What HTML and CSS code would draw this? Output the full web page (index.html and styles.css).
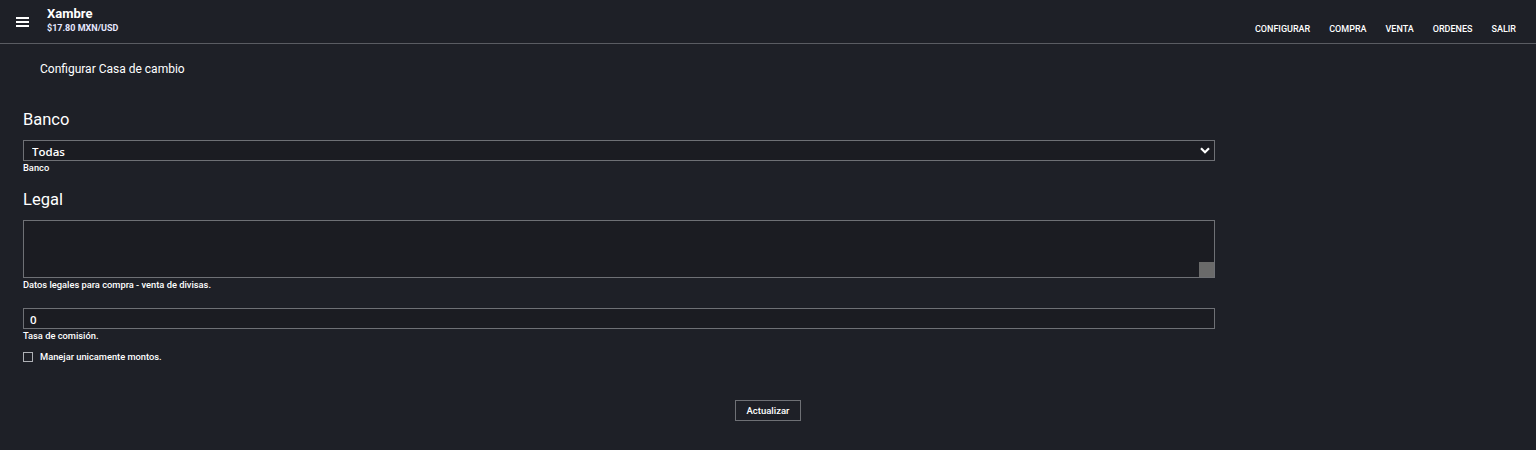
FILE: index.html
```html
<!DOCTYPE html>
<html lang="es">
<head>
    <meta charset="UTF-8">
    <title>Xambre - Configurar</title>
    <link rel="stylesheet" href="styles.css">
</head>
<body>

    <!-- Barra superior -->
    <header class="topbar">
        <div class="brand">
            <button class="menu-btn" aria-label="Menu">
                <svg width="13" height="10" viewBox="0 0 13 10">
                    <rect x="0" y="0" width="13" height="2" fill="#fff"/>
                    <rect x="0" y="4" width="13" height="2" fill="#fff"/>
                    <rect x="0" y="8" width="13" height="2" fill="#fff"/>
                </svg>
            </button>
            <div class="brand-text">
                <span class="brand-name">Xambre</span>
                <span class="brand-rate">$17.80 MXN/USD</span>
            </div>
        </div>
        <nav class="nav">
            <a href="#">CONFIGURAR</a>
            <a href="#">COMPRA</a>
            <a href="#">VENTA</a>
            <a href="#">ORDENES</a>
            <a href="#">SALIR</a>
        </nav>
    </header>

    <main class="page">
        <p class="page-title">Configurar Casa de cambio</p>

        <form class="config-form">
            <h2>Banco</h2>
            <div class="select-wrap">
                <select class="field">
                    <option>Todas</option>
                </select>
                <svg class="chevron" width="10" height="7" viewBox="0 0 10 7">
                    <path d="M1 1.2 L5 5.2 L9 1.2" stroke="#fff" stroke-width="2.2" fill="none"/>
                </svg>
            </div>
            <small class="hint">Banco</small>

            <h2 class="legal">Legal</h2>
            <div class="textarea-wrap">
                <textarea class="field area"></textarea>
                <span class="grip"></span>
            </div>
            <small class="hint">Datos legales para compra - venta de divisas.</small>

            <input class="field number" type="text" value="0">
            <small class="hint">Tasa de comisión.</small>

            <label class="check">
                <span class="box"></span>
                Manejar unicamente montos.
            </label>

            <div class="actions">
                <button type="button" class="btn">Actualizar</button>
            </div>
        </form>
    </main>

</body>
</html>
```

FILE: styles.css
```css
body {
    font-family: Roboto, "Liberation Sans", sans-serif;
    margin: 0;
    background: #1e2027;
    color: #fff;
}

.topbar {
    height: 43px;
    border-bottom: 1px solid #5a5c62;
    display: flex;
    justify-content: space-between;
    align-items: center;
    padding: 0 20px 0 16px;
}

.brand {
    display: flex;
    align-items: center;
}

.menu-btn {
    background: none;
    border: none;
    padding: 0;
    width: 13px;
    height: 10px;
    display: flex;
    margin-top: 1px;
    margin-right: 18px;
}

.brand-text {
    display: flex;
    flex-direction: column;
    margin-top: -3px;
}

.brand-name {
    font-size: 13px;
    font-weight: 700;
    line-height: 16px;
}

.brand-rate {
    font-size: 9px;
    font-weight: 700;
    line-height: 12px;
    color: #e6e8ff;
}

.nav {
    display: flex;
    gap: 19px;
    margin-top: 14px;
}

.nav a {
    color: #fff;
    text-decoration: none;
    font-size: 9px;
    font-weight: 500;
}

.page {
    padding: 0 23px;
}

.page-title {
    font-size: 12px;
    margin: 18px 0 0 17px;
    line-height: 14px;
}

.config-form {
    width: 1192px;
    display: flex;
    flex-direction: column;
}

.config-form h2 {
    font-size: 16.5px;
    font-weight: 400;
    margin: 34px 0 10px;
    line-height: 20px;
}

.config-form h2.legal {
    margin-top: 16px;
    margin-bottom: 10px;
}

.field {
    box-sizing: border-box;
    width: 100%;
    background: #1b1c22;
    border: 1px solid #6e7075;
    color: #fff;
    font-family: "Open Sans", Roboto, sans-serif;
    font-size: 11.5px;
    font-weight: 600;
    margin: 0;
    outline: none;
}

.select-wrap {
    position: relative;
}

select.field {
    height: 21px;
    padding: 1px 0 0 8px;
    appearance: none;
    -webkit-appearance: none;
}

.chevron {
    position: absolute;
    right: 5px;
    top: 7px;
}

.hint {
    font-size: 9.3px;
    font-weight: 500;
    line-height: 12px;
    margin-top: 1px;
}

.textarea-wrap {
    position: relative;
    height: 58px;
}

.area {
    height: 58px;
    resize: none;
    display: block;
}

.grip {
    position: absolute;
    right: 1px;
    bottom: 1px;
    width: 15px;
    height: 15px;
    background: #6a6a6a;
}

.number {
    height: 21px;
    padding: 1px 6px 0;
    margin-top: 17px;
}

.check {
    display: flex;
    align-items: center;
    font-size: 9.3px;
    font-weight: 500;
    margin-top: 9px;
    line-height: 12px;
}

.box {
    width: 8px;
    height: 8px;
    border: 1px solid #aeb0b5;
    margin-right: 7px;
}

.actions {
    display: flex;
    justify-content: center;
    margin-top: 37px;
    width: 1490px;
}

.btn {
    background: transparent;
    border: 1px solid #6e7075;
    color: #fff;
    font-family: inherit;
    font-size: 9.5px;
    font-weight: 500;
    height: 21px;
    padding: 0 11px;
}
```
